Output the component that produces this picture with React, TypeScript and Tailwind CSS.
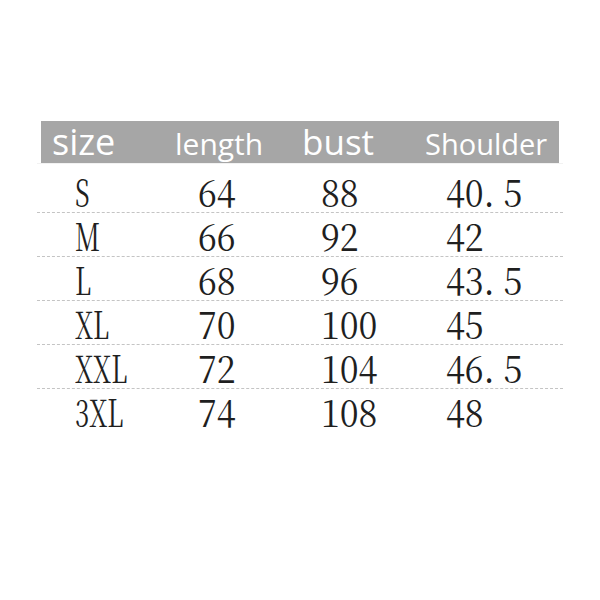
import React from "react";

const rows: [string, string, string, string][] = [
  ["S", "64", "88", "40. 5"],
  ["M", "66", "92", "42"],
  ["L", "68", "96", "43. 5"],
  ["XL", "70", "100", "45"],
  ["XXL", "72", "104", "46. 5"],
  ["3XL", "74", "108", "48"],
];

export default function App() {
  return (
    <div className="w-[600px] h-[600px] bg-white pt-[121px]">
      <div className="ml-[37px] w-[526px]">
        <div className="mx-[4px] h-[42px] bg-[#a6a6a6] text-white flex items-baseline pl-[11px] leading-[41px] font-['Open_Sans','Noto_Sans',sans-serif]">
          <div className="w-[123px] text-[36px]">size</div>
          <div className="w-[127px] text-[30px]">length</div>
          <div className="w-[123px] text-[35px]">bust</div>
          <div className="text-[29px]">Shoulder</div>
        </div>
        <div className="h-px bg-[#f2f2f2]" />
        <div className="text-[#1f1f1f] font-['Noto_Serif_CJK_SC','Liberation_Serif',serif]">
          {rows.map((r, i) => (
            <div
              key={r[0]}
              className={`flex pl-[38px] text-[38px] leading-[43px] ${
                i === 0 ? "pt-[5px]" : ""
              } ${i < rows.length - 1 ? "border-b border-dashed border-[#c4c4c4]" : ""}`}
            >
              <div className="w-[123px]">
                <span className="inline-block origin-left scale-x-[0.68]">{r[0]}</span>
              </div>
              <div className="w-[123px]">
                <span className="inline-block origin-left scale-x-[0.9]">{r[1]}</span>
              </div>
              <div className="w-[125px]">
                <span className="inline-block origin-left scale-x-[0.9]">{r[2]}</span>
              </div>
              <div>
                <span className="inline-block origin-left scale-x-[0.9]">{r[3]}</span>
              </div>
            </div>
          ))}
        </div>
      </div>
    </div>
  );
}
